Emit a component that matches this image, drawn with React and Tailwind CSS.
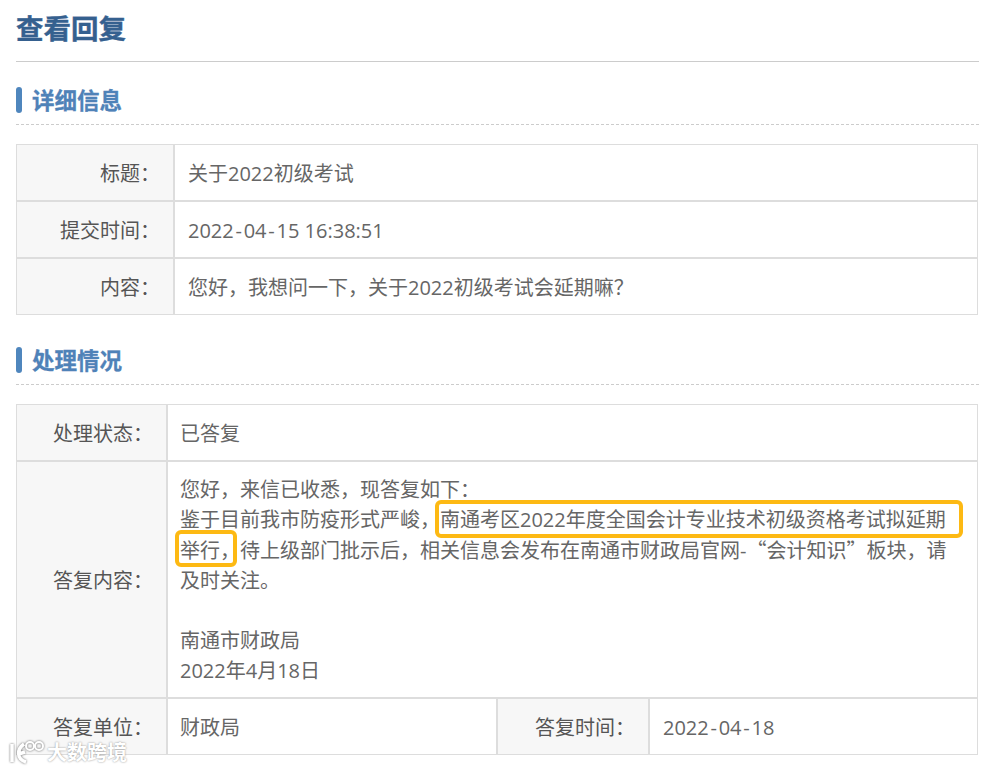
import React from 'react';

const labelCls = "bg-[#f7f7f7] text-right align-middle border-r-2 border-[#dddddd] pt-[2px] pr-[13px] text-[#555555]";
const valueCls = "align-middle pt-[2px] pl-[12px] text-[#666666]";
const detailCls = "align-middle pt-[2px] pl-[13px] text-[#666666]";

function SectionTitle({ children }) {
  return (
    <div className="h-[38px] flex items-start border-b border-dashed border-[#cccccc] mb-[19px]">
      <span className="w-[6px] h-[26px] rounded-[3px] bg-[#4f86bd] mr-[10px]"></span>
      <h2 className="text-[22.5px] leading-[27px] font-bold text-[#4f82b8] [-webkit-text-stroke:0.3px_#4f82b8]">{children}</h2>
    </div>
  );
}

// the hyphen in the reference's dates is wider than the Open Sans one
function Dash() {
  return <span className="mx-[1.75px]">-</span>;
}

function Watermark() {
  return (
    <div className="absolute left-[8px] top-[741px] flex items-center text-white [text-shadow:0_0_2px_#888888]">
      <svg width="39" height="24" viewBox="0 0 39 24" fill="none" stroke="#ffffff" strokeWidth="3.5" className="drop-shadow-[0_0_1px_#666666]">
        <path d="M4 3 V21 M16 3 C9 8 8 18 18 21 M17 11 L11 13" />
        <circle cx="22" cy="5" r="4" strokeWidth="2" />
        <circle cx="31" cy="5" r="4" strokeWidth="2" />
      </svg>
      <span className="text-[20px] leading-[24px] font-bold">大数跨境</span>
    </div>
  );
}

export default function App() {
  return (
    <div
      className="relative h-[770px] overflow-hidden bg-white pl-4 pr-2 text-[20px] leading-[30px]"
      style={{ fontFamily: '"Open Sans", "Noto Sans CJK SC", sans-serif' }}
    >
      <h1 className="h-[62px] pt-[10px] border-b border-[#cccccc] text-[27.5px] leading-[38px] font-bold text-[#35608f] [-webkit-text-stroke:0.4px_#35608f]">查看回复</h1>

      <div className="pt-[25px]">
        <SectionTitle>详细信息</SectionTitle>
      </div>
      <table className="w-[962px] table-fixed border-separate border-spacing-0 border border-[#dddddd]">
        <colgroup>
          <col className="w-[158px]" />
          <col />
        </colgroup>
        <tbody>
          <tr className="h-[57px]">
            <td className={labelCls + " border-b-2"}>标题：</td>
            <td className={detailCls + " border-b-2 border-[#dddddd]"}>关于2022初级考试</td>
          </tr>
          <tr className="h-[57px]">
            <td className={labelCls + " border-b-2"}>提交时间：</td>
            <td className={detailCls + " border-b-2 border-[#dddddd]"}>2022<Dash />04<Dash />15 16:38:51</td>
          </tr>
          <tr className="h-[55px]">
            <td className={labelCls}>内容：</td>
            <td className={detailCls}>您好，我想问一下，关于2022初级考试会延期嘛？</td>
          </tr>
        </tbody>
      </table>

      <div className="pt-[32px]">
        <SectionTitle>处理情况</SectionTitle>
      </div>
      <table className="w-[962px] table-fixed border-separate border-spacing-0 border border-[#dddddd]">
        <colgroup>
          <col className="w-[151px]" />
          <col className="w-[330px]" />
          <col className="w-[152px]" />
          <col />
        </colgroup>
        <tbody>
          <tr className="h-[57px]">
            <td className={labelCls + " border-b-2"}>处理状态：</td>
            <td colSpan={3} className={valueCls + " border-b-2 border-[#dddddd]"}>已答复</td>
          </tr>
          <tr className="h-[237px]">
            <td className={labelCls + " border-b-2"}>答复内容：</td>
            <td colSpan={3} className={valueCls + " border-b-2 border-[#dddddd] pr-[26px] relative"}>
              <p>您好，来信已收悉，现答复如下：</p>
              <p>
                鉴于目前我市防疫形式严峻，南通考区2022年度全国会计专业技术初级资格考试拟延期举行，待上级部门批示后，相关信息会发布在南通市财政局官网-
                <span className="font-['Noto_Sans_CJK_SC']">“会计知识”</span>板块，请及时关注。
              </p>
              <p>&nbsp;</p>
              <p>南通市财政局</p>
              <p>2022年4月18日</p>
              <span className="absolute left-[267px] top-[38px] w-[528px] h-[38px] border-[4px] border-[#fdb913] rounded-[6px]"></span>
              <span className="absolute left-[7px] top-[68px] w-[62px] h-[37px] border-[4px] border-[#fdb913] rounded-[6px]"></span>
            </td>
          </tr>
          <tr className="h-[55px]">
            <td className={labelCls}>答复单位：</td>
            <td className={valueCls + " border-r-2 border-[#dddddd]"}>财政局</td>
            <td className={labelCls}>答复时间：</td>
            <td className={detailCls}>2022<Dash />04<Dash />18</td>
          </tr>
        </tbody>
      </table>

      <Watermark />
    </div>
  );
}
